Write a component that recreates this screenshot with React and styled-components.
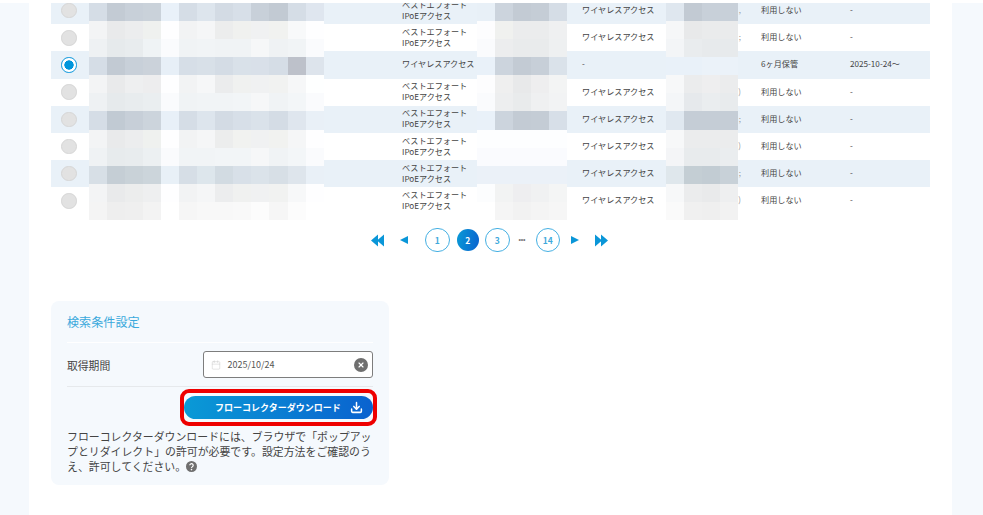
import React from "react"
import styled, { createGlobalStyle } from "styled-components"
import { Calendar, Download, X } from "lucide-react"

const GlobalStyle = createGlobalStyle`
  html, body {
    margin: 0;
    padding: 0;
    background: #fff;
    overflow: hidden;
  }
  body {
    font-family: "Noto Sans CJK JP", "Noto Sans", sans-serif;
  }
`

const S = {
  Page: styled.div`
    margin-top: 3px;
    height: 512px;
    background: #f5f9fd;
    padding: 0 31px 0 29px;
    overflow: hidden;
  `,
  Content: styled.main`
    height: 100%;
    background: #fff;
    padding: 0 22px;
    overflow: hidden;
  `,
  Table: styled.div`
    position: relative;
    margin-top: -6px;
  `,
  Row: styled.div`
    display: grid;
    grid-template-columns: 36px 315px 180px 159px 20px 89px 1fr;
    align-items: center;
    height: 27.2px;
    background: ${(p) => (p.$tinted ? "#e9f1f8" : "#fff")};
    font-size: 8.15px;
    line-height: 11px;
    color: #444;
  `,
  RadioCell: styled.div`
    display: flex;
    justify-content: center;
  `,
  Radio: styled.span`
    box-sizing: border-box;
    width: 15.5px;
    height: 15.5px;
    border-radius: 50%;
    background: ${(p) => (p.$checked ? "radial-gradient(circle, #0096dc 0 4.4px, #fff 4.9px)" : "#e2e2e2")};
    border: 1px solid ${(p) => (p.$checked ? "#0a96dc" : "#d6d6d6")};
  `,
  Cell: styled.div`
    margin-bottom: 2px;
    white-space: nowrap;
  `,
  TypeCell: styled.div`
    display: flex;
    justify-content: space-between;
    margin-bottom: 2px;
    white-space: nowrap;
  `,
  Peek: styled.span`
    color: #999;
  `,
  Mosaic: styled.div`
    position: absolute;
    top: 6px;
    left: ${(p) => p.$left}px;
    display: grid;
    grid-template-columns: repeat(${(p) => p.$cols}, 18.08px);
    grid-auto-rows: 18.08px;
  `,
  Pixel: styled.i`
    display: block;
    background: ${(p) => p.$color};
  `,
  Pager: styled.nav`
    display: flex;
    align-items: center;
    justify-content: center;
    height: 24px;
    margin: 13.5px 2px 0 0;
  `,
  Arrow: styled.svg`
    display: block;
    margin-left: ${(p) => p.$gap || 0}px;
    fill: #0a96d8;
  `,
  PageNumber: styled.span`
    box-sizing: border-box;
    display: flex;
    align-items: center;
    justify-content: center;
    width: ${(p) => (p.$active ? 22.5 : 24.5)}px;
    height: ${(p) => (p.$active ? 22.5 : 24.5)}px;
    margin-left: ${(p) => p.$gap || 0}px;
    border-radius: 50%;
    border: ${(p) => (p.$active ? "none" : "1.3px solid #45b0e3")};
    background: ${(p) => (p.$active ? "linear-gradient(100deg, #0a9ad6, #0a62cf)" : "#fff")};
    color: ${(p) => (p.$active ? "#fff" : "#3fa9dc")};
    font-size: 8.5px;
    font-weight: 700;
  `,
  Dots: styled.span`
    margin-left: 9px;
    width: 8px;
    font-family: "Liberation Sans", sans-serif;
    font-size: 7px;
    letter-spacing: -0.2px;
    line-height: 8px;
    color: #777;
  `,
  Panel: styled.section`
    box-sizing: border-box;
    width: 338px;
    height: 184px;
    margin-top: 49px;
    padding: 0 16px;
    border-radius: 8px;
    background: #f5f9fd;
  `,
  PanelTitle: styled.h2`
    margin: 0;
    height: 41px;
    line-height: 42px;
    font-size: 12.1px;
    font-weight: 400;
    color: #3aa9dc;
    border-bottom: 1px solid #fff;
  `,
  FieldRow: styled.div`
    display: flex;
    align-items: center;
    justify-content: space-between;
    height: 43px;
    border-bottom: 1px solid #e6e9ec;
  `,
  Label: styled.label`
    font-size: 10.8px;
    color: #444;
  `,
  DateInput: styled.div`
    box-sizing: border-box;
    display: flex;
    align-items: center;
    width: 170px;
    height: 27px;
    padding: 0 4px 0 7px;
    background: #fff;
    border: 1px solid #7d7d7d;
    border-radius: 3px;
    color: #555;
    font-size: 9px;
  `,
  DateValue: styled.span`
    flex: 1;
    margin-left: 6.5px;
  `,
  ClearButton: styled.span`
    display: flex;
    align-items: center;
    justify-content: center;
    width: 14px;
    height: 14px;
    border-radius: 50%;
    background: #6f6f6f;
    color: #fff;
  `,
  ButtonRow: styled.div`
    position: relative;
    display: flex;
    justify-content: flex-end;
    margin-top: 9px;
  `,
  DownloadButton: styled.button`
    display: flex;
    align-items: center;
    box-sizing: border-box;
    width: 189px;
    height: 23px;
    padding: 0 10px 0 31px;
    border: none;
    border-radius: 12px;
    background: linear-gradient(95deg, #0a9ad6, #0a62cf);
    color: #fff;
    font-family: inherit;
    font-size: 9px;
    font-weight: 700;
    justify-content: space-between;
  `,
  Highlight: styled.span`
    position: absolute;
    top: -7px;
    right: -4px;
    width: 197px;
    height: 37px;
    box-sizing: border-box;
    border: 4px solid #ee0000;
    border-radius: 9px;
    pointer-events: none;
  `,
  Note: styled.p`
    margin: 10px 0 0;
    width: 306px;
    font-size: 10.9px;
    line-height: 15px;
    color: #444;
  `,
  Help: styled.svg`
    display: inline-block;
    vertical-align: -1px;
  `,
}

const rows = [
  { line: ["ベストエフォート", "IPoEアクセス"], type: "ワイヤレスアクセス", peek: ",", plan: "利用しない", date: "-" },
  { line: ["ベストエフォート", "IPoEアクセス"], type: "ワイヤレスアクセス", peek: ";", plan: "利用しない", date: "-" },
  { line: ["ワイヤレスアクセス"], type: "-", peek: "", plan: "6ヶ月保管", date: "2025-10-24〜", checked: true },
  { line: ["ベストエフォート", "IPoEアクセス"], type: "ワイヤレスアクセス", peek: ")", plan: "利用しない", date: "-" },
  { line: ["ベストエフォート", "IPoEアクセス"], type: "ワイヤレスアクセス", peek: ";", plan: "利用しない", date: "-" },
  { line: ["ベストエフォート", "IPoEアクセス"], type: "ワイヤレスアクセス", peek: ")", plan: "利用しない", date: "-" },
  { line: ["ベストエフォート", "IPoEアクセス"], type: "ワイヤレスアクセス", peek: ";", plan: "利用しない", date: "-" },
  { line: ["ベストエフォート", "IPoEアクセス"], type: "ワイヤレスアクセス", peek: ")", plan: "利用しない", date: "-" },
]

// censored blocks over the table, one string per 18px line
const mosaics = [
  {
    left: 37.7,
    cols: 13,
    lines: [
      "d5dde6 c3cbd4 c8d0d9 cad2da e9f1f9 d5dde6 dde5ed d3dbe4 d7dfe8 c8d0d9 c2cad3 d5dde6 dfe6ef",
      "f3f4f5 e9eaeb ecedee eff1ef fefeff f2f3f4 f5f6f7 eceded f0f1ef f0f1f2 f1f2f0 f8f9fa fefeff",
      "eef1f3 e6eaec e8ecee eff3f5 fafbfd f0f3f5 f1f4f6 f0f3f5 f0f3f5 f6f7f8 eff2f4 f1f4f6 fafbfd",
      "d5dde6 c2cad3 c8d0d9 cbd2da e7eff7 d6dee7 d8e0e8 d4dce5 d9e1e9 d9e0e9 d5dde6 bdc1ca dde4ec",
      "f3f4f5 e9eaeb eeeff0 ededee fefeff f2f3f4 f6f7f8 ebeced f0f1f0 f0f1f2 f1f2f1 f6f7f8 feffff",
      "eef1f3 e6eaec e8ecee eaeef0 fafbfd f0f3f5 f1f4f6 f1f4f6 f2f5f7 f6f7f8 f0f3f5 f3f6f8 fafbfd",
      "d5dde6 c1cad3 c7cfd8 ccd4dc e8f0f8 d5dde6 dde5ed d3dbe4 d7dfe8 dae2ea d4dce5 dfe6ee e9f0f7",
      "f3f4f5 e9eaeb ecedee eff1ef fefeff f2f3f4 f5f6f7 eceded f1f2f0 f0f1f2 f1f2f0 f5f6f7 fefeff",
      "eff2f4 e7ebed e8ecee ecf0f2 fafbfd f1f4f6 f1f4f6 f2f5f7 f2f5f7 f6f7f8 f0f3f5 f3f6f8 fafbfd",
      "d7dfe6 c5ced5 c9d2d8 ccd5db e8f0f7 d6dee6 dde6ec d2dbe2 d8e0e8 dbe3ea d7dfe6 dee5ec e9f0f7",
      "f3f4f5 e9eaeb eceded eeeff0 fefeff f2f3f4 f5f6f7 ecedee f0f1f0 f0f1f2 f1f2f1 f7f8f9 fefeff",
      "f4f4f4 eeeeee efefef f3f3f3 ffffff f6f6f6 f8f8f8 f8f8f8 f9f9f9 fcfcfc f6f6f6 fcfcfc ffffff",
    ],
  },
  {
    left: 425.7,
    cols: 5,
    lines: [
      "e8f0f7 ccd4dd c3cbd4 c5cdd6 d5dde6",
      "fdfdfe f0f1ef ebeced ebeced eff0f1",
      "fafbfd ecedee e9ebec e9ebec eef0f1",
      "e9f1f9 ccd4dd c3cbd4 c7cfd8 dae2ea",
      "fdfdfe efefef e8e9ea eeeeef f3f4f4",
      "fafbfd edeeef e9ebec eff0f1 f2f3f4",
      "e9f1f9 ccd4dd c3cbd4 c4ccd5 d7dfe8",
      "fdfeff fdfeff fdfeff fdfeff fdfeff",
      "fafbfe fafbfe fafbfe fafbfe fafbfe",
      "ebf1f8 ebf1f8 ebf1f8 ebf1f8 ebf1f8",
      "fcfdfe f2f3f3 eeeef0 f0f1f2 f4f5f5",
      "ffffff f5f5f5 f2f2f2 f4f4f4 f6f6f6",
    ],
  },
  {
    left: 615,
    cols: 4,
    lines: [
      "dfe7ef c2cad3 c8d0d9 c8d0d9",
      "f6f7f8 e8e9ea eaebec eaebec",
      "f3f5f7 e9ecee e7eaec e7eaec",
      "e9f1f9 e9f1f9 ebf2f9 ebf2f9",
      "f7f8f9 ebeced eeeeef ebeced",
      "f4f6f8 e6e9ec eaedef e8ebed",
      "e0e8f0 c5cdd6 c5cdd6 c5cdd6",
      "f7f8f9 ebeced ebeced ebeced",
      "f4f5f7 e8ebed e8ebed eaedef",
      "dfe7ec c4ced4 c2ccd3 c8d1d8",
      "f7f8f9 ebeced e9eaeb eeeff0",
      "fafafa f0f0f0 efefef f2f2f2",
    ],
  },
]

const DoubleArrow = ({ flip, gap }) => (
  <S.Arrow $gap={gap} width="13" height="13" viewBox="0 0 13 13">
    {flip ? (
      <path d="M0 0.5 7 6.5 0 12.5ZM6 0.5 13 6.5 6 12.5Z" />
    ) : (
      <path d="M13 0.5 6 6.5 13 12.5ZM7 0.5 0 6.5 7 12.5Z" />
    )}
  </S.Arrow>
)

const SingleArrow = ({ flip, gap }) => (
  <S.Arrow $gap={gap} width="8" height="8" viewBox="0 0 8 8">
    <path d={flip ? "M0 0 8 4 0 8Z" : "M8 0 0 4 8 8Z"} />
  </S.Arrow>
)

export default function App() {
  return (
    <>
      <GlobalStyle />
      <S.Page>
        <S.Content>
          <S.Table>
            {rows.map((row, index) => (
              <S.Row key={index} $tinted={index % 2 === 0}>
                <S.RadioCell>
                  <S.Radio $checked={row.checked} />
                </S.RadioCell>
                <div />
                <S.Cell>
                  {row.line.map((text) => (
                    <div key={text}>{text}</div>
                  ))}
                </S.Cell>
                <S.TypeCell>
                  <span>{row.type}</span>
                  <S.Peek>{row.peek}</S.Peek>
                </S.TypeCell>
                <div />
                <S.Cell>{row.plan}</S.Cell>
                <S.Cell>{row.date}</S.Cell>
              </S.Row>
            ))}
            {mosaics.map((mosaic) => (
              <S.Mosaic key={mosaic.left} $left={mosaic.left} $cols={mosaic.cols}>
                {mosaic.lines
                  .join(" ")
                  .split(" ")
                  .map((color, index) => (
                    <S.Pixel key={index} $color={`#${color}`} />
                  ))}
              </S.Mosaic>
            ))}
          </S.Table>

          <S.Pager>
            <DoubleArrow />
            <SingleArrow gap={16} />
            <S.PageNumber $gap={17}>1</S.PageNumber>
            <S.PageNumber $gap={7} $active>
              2
            </S.PageNumber>
            <S.PageNumber $gap={6}>3</S.PageNumber>
            <S.Dots>•••</S.Dots>
            <S.PageNumber $gap={9}>14</S.PageNumber>
            <SingleArrow flip gap={11} />
            <DoubleArrow flip gap={16} />
          </S.Pager>

          <S.Panel>
            <S.PanelTitle>検索条件設定</S.PanelTitle>
            <S.FieldRow>
              <S.Label>取得期間</S.Label>
              <S.DateInput>
                <Calendar size={10} strokeWidth={1.2} color="#c9c9c9" />
                <S.DateValue>2025/10/24</S.DateValue>
                <S.ClearButton>
                  <X size={8} strokeWidth={3.5} />
                </S.ClearButton>
              </S.DateInput>
            </S.FieldRow>
            <S.ButtonRow>
              <S.DownloadButton>
                フローコレクターダウンロード
                <Download size={13} strokeWidth={2.8} />
              </S.DownloadButton>
              <S.Highlight />
            </S.ButtonRow>
            <S.Note>
              フローコレクターダウンロードには、ブラウザで「ポップアップとリダイレクト」の許可が必要です。設定方法をご確認のうえ、許可してください。
              <S.Help width="11" height="11" viewBox="0 0 11 11">
                <circle cx="5.5" cy="5.5" r="5.5" fill="#6f6f6f" />
                <path
                  d="M3.8 4.3a1.7 1.6 0 1 1 2.7 1.3c-.7.5-1 .7-1 1.4"
                  fill="none"
                  stroke="#fff"
                  strokeWidth="1.2"
                />
                <circle cx="5.5" cy="8.6" r=".8" fill="#fff" />
              </S.Help>
            </S.Note>
          </S.Panel>
        </S.Content>
      </S.Page>
    </>
  )
}
